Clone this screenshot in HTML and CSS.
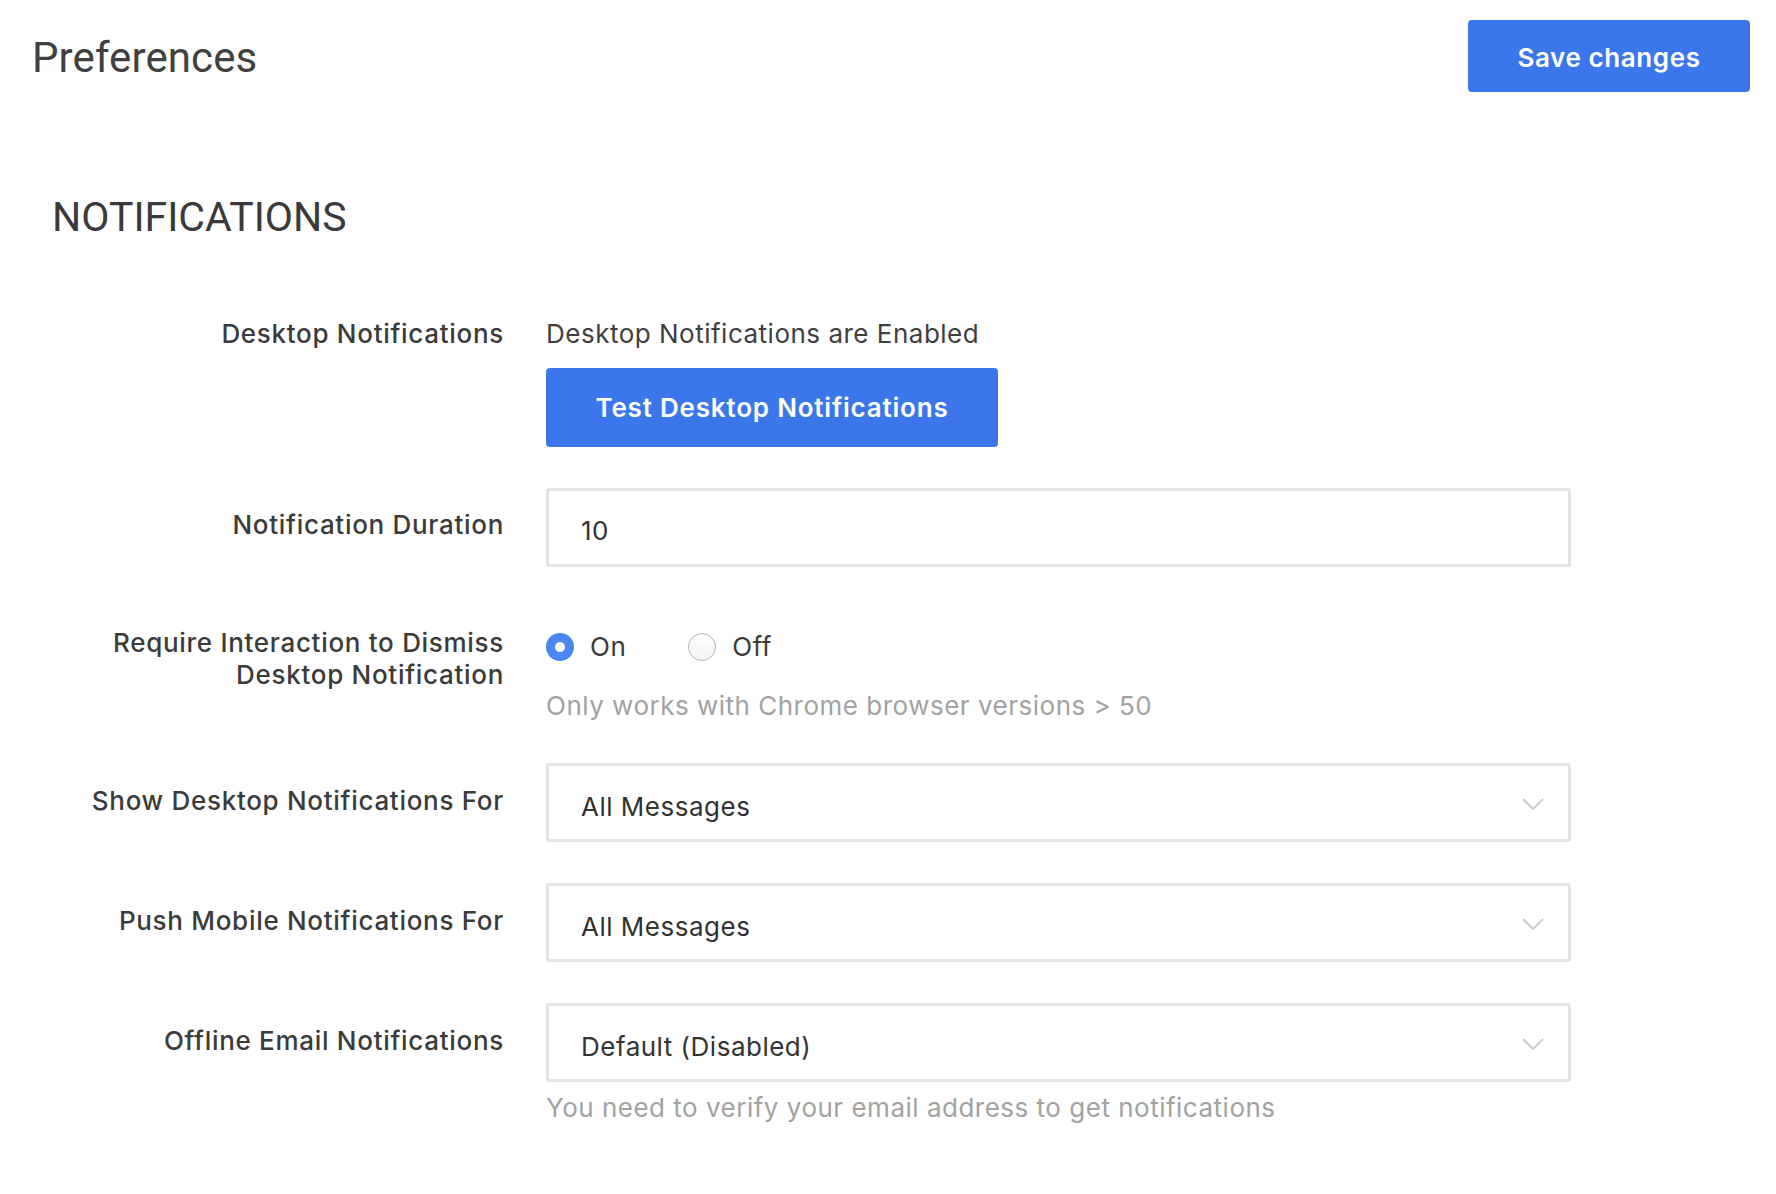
FILE: index.html
```html
<!DOCTYPE html>
<html lang="en">
<head>
<meta charset="utf-8">
<title>Preferences</title>
<link rel="stylesheet" href="styles.css">
</head>
<body>
<header class="page-header">
  <h1 class="page-title">Preferences</h1>
  <button class="btn btn-save" type="button">Save changes</button>
</header>
<section class="section">
  <h2 class="section-title">NOTIFICATIONS</h2>
  <div class="form">
    <div class="label">Desktop Notifications</div>
    <div class="control">
      <div class="value-text">Desktop Notifications are Enabled</div>
      <button class="btn btn-test" type="button">Test Desktop Notifications</button>
    </div>

    <div class="label label-field">Notification Duration</div>
    <div class="control">
      <div class="field">10</div>
    </div>

    <div class="label label-radio">Require Interaction to Dismiss<br>Desktop Notification</div>
    <div class="control">
      <div class="radio-group">
        <span class="radio-item"><span class="radio radio-on"></span><span class="radio-text">On</span></span>
        <span class="radio-item"><span class="radio"></span><span class="radio-text">Off</span></span>
      </div>
      <div class="help help-radio">Only works with Chrome browser versions &gt; 50</div>
    </div>

    <div class="label label-field label-select">Show Desktop Notifications For</div>
    <div class="control">
      <div class="field select"><span>All Messages</span><svg class="chev" width="24" height="14" viewBox="0 0 24 14"><path d="M2 2 L12 12 L22 2" fill="none" stroke="#c9cdd2" stroke-width="2"/></svg></div>
    </div>

    <div class="label label-field label-select">Push Mobile Notifications For</div>
    <div class="control">
      <div class="field select"><span>All Messages</span><svg class="chev" width="24" height="14" viewBox="0 0 24 14"><path d="M2 2 L12 12 L22 2" fill="none" stroke="#c9cdd2" stroke-width="2"/></svg></div>
    </div>

    <div class="label label-field label-select">Offline Email Notifications</div>
    <div class="control">
      <div class="field select"><span>Default (Disabled)</span><svg class="chev" width="24" height="14" viewBox="0 0 24 14"><path d="M2 2 L12 12 L22 2" fill="none" stroke="#c9cdd2" stroke-width="2"/></svg></div>
      <div class="help help-email">You need to verify your email address to get notifications</div>
    </div>
  </div>
</section>
</body>
</html>
```
FILE: styles.css
```css
* { box-sizing: border-box; }
html, body { margin: 0; padding: 0; background: #ffffff; }
body {
  font-family: Inter, "Noto Sans", sans-serif;
  color: #3b3b3b;
  font-size: 26px;
  letter-spacing: 0.5px;
  line-height: 32px;
}
.page-header {
  display: flex;
  justify-content: space-between;
  align-items: center;
  padding: 20px 26px 0 32px;
}
.page-title {
  margin: 0;
  padding-top: 4px;
  font-family: Roboto, Inter, sans-serif;
  font-weight: 400;
  font-size: 42px;
  line-height: 52px;
  letter-spacing: 0.1px;
  color: #404040;
}
.btn {
  border: none;
  border-radius: 4px;
  background: #3b77ea;
  color: #ffffff;
  font-family: Inter, sans-serif;
  font-weight: 600;
  cursor: pointer;
}
.btn-save {
  width: 282px;
  height: 72px;
  font-size: 26px;
  letter-spacing: 0.6px;
  padding-top: 4px;
}
.section {
  padding-left: 52px;
}
.section-title {
  margin: 101px 0 77px 0;
  font-family: Roboto, Inter, sans-serif;
  font-weight: 400;
  font-size: 41px;
  line-height: 48px;
  letter-spacing: 0;
  color: #3a3a3a;
}
.form {
  display: grid;
  grid-template-columns: 452px 1025px;
  column-gap: 42px;
  row-gap: 41px;
}
.label {
  text-align: right;
  font-weight: 500;
  letter-spacing: 0.7px;
  line-height: 32px;
  color: #3b3b3b;
}
.label-field { padding-top: 21px; }
.label-select { padding-top: 22px; }
.label-radio { padding-top: 19px; }
.control {
  display: flex;
  flex-direction: column;
  align-items: flex-start;
}
.value-text { color: #3f3f3f; }
.btn-test {
  margin-top: 18px;
  width: 452px;
  height: 79px;
  font-size: 26px;
  letter-spacing: 0.8px;
}
.field {
  width: 1025px;
  height: 79px;
  border: 3px solid #e2e4e7;
  border-radius: 3px;
  padding: 7px 23px 0 32px;
  display: flex;
  align-items: center;
  color: #333333;
}
.select {
  justify-content: space-between;
  padding-top: 8px;
}
.chev { display: block; margin-top: -6px; }
.radio-group {
  display: flex;
  align-items: center;
  gap: 62px;
  height: 40px;
  margin-top: 19px;
}
.radio-item {
  display: flex;
  align-items: center;
  gap: 16px;
}
.radio {
  width: 28px;
  height: 28px;
  border-radius: 50%;
  border: 1px solid #b7b7b7;
  background: linear-gradient(#ffffff, #f4f4f4);
  box-shadow: inset 0 1px 1px rgba(0,0,0,0.06);
}
.radio-on {
  border: none;
  background: radial-gradient(circle, #ffffff 0 4.5px, #4a87f2 5.5px);
  box-shadow: none;
}
.radio-text { color: #3b3b3b; }
.help {
  color: #a2a2a2;
}
.help-radio { margin-top: 23px; }
.help-email { margin-top: 10px; }
```
